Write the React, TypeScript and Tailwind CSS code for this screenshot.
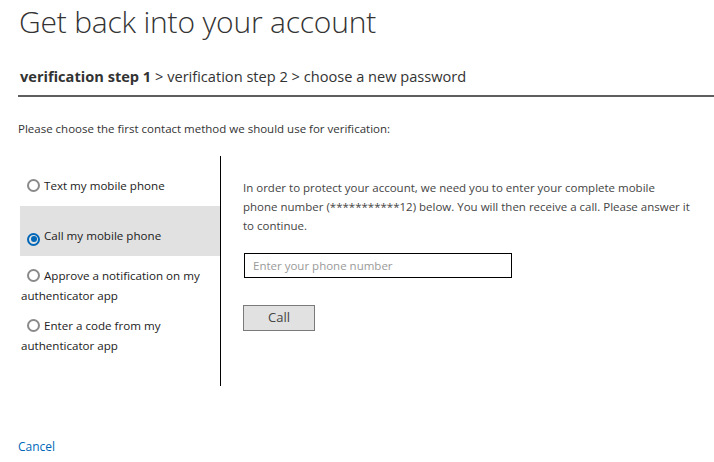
import React, { useState } from 'react';

const options = [
  { id: 'text', label: 'Text my mobile phone', pad: 'pt-[20px] pb-[10px]' },
  { id: 'call', label: 'Call my mobile phone', pad: 'pt-[20px] pb-[10px]' },
  { id: 'approve', label: 'Approve a notification on my authenticator app', pad: 'pt-[10px]' },
  { id: 'code', label: 'Enter a code from my authenticator app', pad: 'pt-[10px]' },
];

function Radio({ checked }: { checked: boolean }) {
  return (
    <span
      className={`ml-[6px] mr-[4px] inline-flex h-[13px] w-[13px] items-center justify-center rounded-full border-2 align-[-2px] ${
        checked ? 'border-[#0067b8]' : 'border-[#8a8a8a]'
      }`}
    >
      {checked && <span className="h-[6px] w-[6px] rounded-full bg-[#0067b8]" />}
    </span>
  );
}

export default function App() {
  const [selected, setSelected] = useState('call');

  return (
    <div className="min-h-[462px] bg-white pl-[18px] font-['Open_Sans',sans-serif] text-[#333]">
      <h1 className="pl-[1px] pt-[2px] text-[30px] leading-[40px] font-light tracking-[-0.2px] text-[#333]">
        Get back into your account
      </h1>

      <div className="mt-[24px] border-b-2 border-[#5e5e5e] pb-[9px] pl-[2px] text-[14.6px] leading-[20px] text-[#333]">
        <span className="font-bold">verification step 1</span> &gt; verification step 2 &gt; choose a new password
      </div>

      <p className="mt-[23px] text-[11.5px] leading-[18px] text-[#333]">
        Please choose the first contact method we should use for verification:
      </p>

      <div className="mt-[18px] flex">
        <div className="ml-[2px] h-[230px] w-[201px] border-r border-black">
          {options.map((o) => (
            <div
              key={o.id}
              onClick={() => setSelected(o.id)}
              className={`${o.pad} ${selected === o.id && o.id === 'call' ? 'bg-[#e1e1e1]' : ''} w-[200px] cursor-pointer pl-[1px] pr-[6px] text-[11.6px] leading-[20px] text-[#222]`}
            >
              <Radio checked={selected === o.id} />
              {o.label}
            </div>
          ))}
        </div>

        <div className="pl-[22px] pt-[22px]">
          <p className="w-[460px] text-[11.5px] leading-[19px] text-[#444]">
            In order to protect your account, we need you to enter your complete mobile
            <br />
            phone number (***********12) below. You will then receive a call. Please answer it to continue.
          </p>
          <input
            placeholder="Enter your phone number"
            className="ml-[1px] mt-[18px] block h-[25px] w-[268px] border border-black px-[8px] text-[11.5px] text-[#333] outline-none placeholder:text-[#9a9a9a]"
          />
          <button className="mt-[27px] block h-[26px] w-[72px] border border-[#7a7a7a] bg-[#e1e1e1] text-[13px] text-[#444]">
            Call
          </button>
        </div>
      </div>

      <a href="#" className="mt-[52px] inline-block text-[12px] leading-[18px] text-[#0067b8]">
        Cancel
      </a>
    </div>
  );
}
